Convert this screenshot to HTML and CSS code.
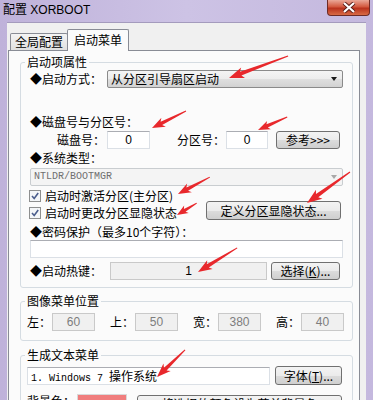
FILE: index.html
```html
<!DOCTYPE html>
<html lang="zh-CN">
<head>
    <meta charset="UTF-8">
    <title>配置 XORBOOT</title>
    <link rel="stylesheet" href="styles.css">
</head>
<body>

<div class="window">
    <div class="titlebar">
        <span class="title">配置 XORBOOT</span>
        <span class="close">
            <svg width="14" height="11" viewBox="0 0 14 11">
                <path d="M2 1L12 10M12 1L2 10" stroke="#5a1e18" stroke-width="4"/>
                <path d="M2 1L12 10M12 1L2 10" stroke="#fff" stroke-width="2.2"/>
            </svg>
        </span>
    </div>

    <div class="client">
        <div class="tabs">
            <div class="tab">全局配置</div>
            <div class="tab active">启动菜单</div>
        </div>

        <div class="panel">
            <!-- boot item properties -->
            <fieldset class="group g-boot">
                <legend>启动项属性</legend>
                <div class="gbody">
                    <div class="row r-mode">
                        <span class="lbl lbl-mode">◆启动方式：</span>
                        <div class="combo">从分区引导扇区启动<i class="caret"></i></div>
                    </div>

                    <div class="line t-disk">◆磁盘号与分区号：</div>
                    <div class="row r-disk">
                        <span class="lbl lbl-disk">磁盘号：</span>
                        <span class="field num f-disk">0</span>
                        <span class="lbl lbl-part">分区号：</span>
                        <span class="field num f-part">0</span>
                        <span class="btn b-ref">参考&gt;&gt;&gt;</span>
                    </div>

                    <div class="line t-sys">◆系统类型：</div>
                    <div class="combo disabled">NTLDR/BOOTMGR<i class="caret"></i></div>

                    <div class="row r-checks">
                        <div class="checks">
                            <label class="check">
                                <svg width="12" height="12" viewBox="0 0 12 12"><rect x="0.5" y="0.5" width="11" height="11" fill="#f4f6f8" stroke="#8e8f8f"/><path d="M3 6L5.2 8.5L9.2 3" fill="none" stroke="#4a5d8c" stroke-width="1.6"/></svg>
                                启动时激活分区(主分区)
                            </label>
                            <label class="check">
                                <svg width="12" height="12" viewBox="0 0 12 12"><rect x="0.5" y="0.5" width="11" height="11" fill="#f4f6f8" stroke="#8e8f8f"/><path d="M3 6L5.2 8.5L9.2 3" fill="none" stroke="#4a5d8c" stroke-width="1.6"/></svg>
                                启动时更改分区显隐状态
                            </label>
                        </div>
                        <span class="btn b-hide">定义分区显隐状态...</span>
                    </div>

                    <div class="line t-pw">◆密码保护（最多10个字符）：</div>
                    <div class="field f-pw"></div>

                    <div class="row r-hotkey">
                        <span class="lbl lbl-hot">◆启动热键：</span>
                        <span class="field disabled f-hot">1</span>
                        <span class="btn b-key">选择(<u>K</u>)...</span>
                    </div>
                </div>
            </fieldset>

            <!-- image menu position -->
            <fieldset class="group g-pos">
                <legend>图像菜单位置</legend>
                <div class="gbody">
                    <div class="row r-pos">
                        <span class="lbl lbl-pos">左：</span>
                        <span class="field disabled f-pos">60</span>
                        <span class="lbl lbl-pos">上：</span>
                        <span class="field disabled f-pos">50</span>
                        <span class="lbl lbl-pos">宽：</span>
                        <span class="field disabled f-pos">380</span>
                        <span class="lbl lbl-pos">高：</span>
                        <span class="field disabled f-pos">40</span>
                    </div>
                </div>
            </fieldset>

            <!-- text menu -->
            <fieldset class="group g-text">
                <legend>生成文本菜单</legend>
                <div class="gbody">
                    <div class="row r-text">
                        <span class="field f-text">1. Windows 7 <span class="cjk">操作系统</span></span>
                        <span class="btn b-font">字体(<u>T</u>)...</span>
                    </div>
                    <div class="row r-color">
                        <span class="lbl lbl-color">背景色：</span>
                        <span class="swatch"></span>
                        <span class="btn b-color">将选择的颜色设为菜单背景色</span>
                    </div>
                </div>
            </fieldset>
        </div>
    </div>

    <!-- red annotation arrows drawn over the dialog -->
    <svg class="arrows" width="373" height="400" viewBox="0 0 373 400">
        <g fill="#e8282c">
            <path transform="translate(229 78) rotate(-20.4)" d="M0 0L15-5.5L12.5-2L63-0.6L63 0.6L12.5 2L15 5.5Z"/>
            <path transform="translate(152 128) rotate(-26.6)" d="M0 0L13-5L10.5-1.8L38-0.5L38 0.5L10.5 1.8L13 5Z"/>
            <path transform="translate(258 130) rotate(-24.1)" d="M0 0L12-4.6L10-1.7L32-0.5L32 0.5L10 1.7L12 4.6Z"/>
            <path transform="translate(178 194) rotate(-28)" d="M0 0L13-5L10.5-1.8L36-0.5L36 0.5L10.5 1.8L13 5Z"/>
            <path transform="translate(307 203) rotate(-35.8)" d="M0 0L15-5.5L12.5-2L53-0.6L53 0.6L12.5 2L15 5.5Z"/>
            <path transform="translate(177 215) rotate(-31)" d="M0 0L11-4.4L9-1.6L23-0.5L23 0.5L9 1.6L11 4.4Z"/>
            <path transform="translate(198 272) rotate(-31.6)" d="M0 0L14-5.2L11.5-1.9L46-0.5L46 0.5L11.5 1.9L14 5.2Z"/>
            <path transform="translate(157 377) rotate(-44)" d="M0 0L14-5.2L11.5-1.9L39-0.5L39 0.5L11.5 1.9L14 5.2Z"/>
        </g>
    </svg>
</div>

</body>
</html>
```

FILE: styles.css
```css
* {
    box-sizing: border-box;
}
body {
    margin: 0;
    font-family: "Noto Sans CJK SC", "Liberation Sans", sans-serif;
    font-size: 12px;
    color: #000;
}
.window {
    position: relative;
    width: 373px;
    height: 400px;
    overflow: hidden;
    background: linear-gradient(to right, #bfb2da, #cdc3e5 50%, #c4b8de);
}
.titlebar {
    height: 22px;
    display: flex;
    justify-content: space-between;
    align-items: flex-start;
    padding: 0 3px;
}
.title {
    line-height: 20px;
    font-family: "Liberation Sans", "Noto Sans CJK SC", sans-serif;
}
.close {
    width: 43px;
    height: 16px;
    border: 1px solid #6e2b25;
    border-top: none;
    border-radius: 0 0 4px 4px;
    background: linear-gradient(#eaa898, #d3593f 45%, #b9321d 55%, #d86b45);
    display: flex;
    justify-content: center;
    align-items: center;
}
.client {
    margin: 0 7px;
    height: 378px;
    background: #f0f0f0;
    border-top: 1px solid #a49bbd;
}

/* tabs */
.tabs {
    height: 27px;
    display: flex;
    align-items: flex-end;
    padding-left: 3px;
}
.tab {
    height: 17px;
    padding: 0 4px;
    line-height: 16px;
    border: 1px solid #898c95;
    border-bottom: none;
    border-radius: 2px 2px 0 0;
    background: linear-gradient(#f4f4f4, #e0e0e0);
}
.tab.active {
    position: relative;
    z-index: 1;
    height: 22px;
    margin: 0 0 -1px -1px;
    padding: 0 6px 1px;
    line-height: 19px;
    background: #fbfbfb;
}
.panel {
    margin: 0 6px 0 1px;
    height: 360px;
    border: 1px solid #898c95;
    background: #fbfbfb;
    padding: 4px 6px 0 11px;
}

/* group boxes */
fieldset {
    margin: 0;
    padding: 0;
    min-width: 0;
    border: 1px solid #d5dce2;
    border-radius: 3px;
}
legend {
    margin-left: 4px;
    padding: 0 2px;
    line-height: 14px;
}
.g-boot .gbody {
    padding: 0 9px 7px;
}
.g-pos {
    margin-top: 6px;
}
.g-pos .gbody {
    padding: 5px 6px 9px;
}
.g-text {
    margin-top: 7px;
}
.g-text .gbody {
    padding: 4px 6px 10px;
}

.row {
    display: flex;
    align-items: center;
}
.line {
    height: 14px;
    line-height: 14px;
    white-space: nowrap;
}
.lbl {
    white-space: nowrap;
    line-height: 14px;
}

/* inputs, combos and buttons */
.field {
    display: block;
    height: 18px;
    line-height: 16px;
    padding: 0 3px;
    background: #fff;
    border: 1px solid #dbe0e6;
    border-top-color: #abadb3;
    white-space: nowrap;
    overflow: hidden;
}
.field.num {
    text-align: center;
    font-family: "Liberation Sans", sans-serif;
}
.field.disabled {
    background: #f0f0f0;
    border-color: #c9c9c9;
    text-align: center;
    font-family: "Liberation Sans", sans-serif;
    color: #7d7d7d;
}
.combo {
    position: relative;
    height: 18px;
    line-height: 16px;
    padding: 0 3px;
    border: 1px solid #8a8a8a;
    border-radius: 2px;
    background: linear-gradient(#f4f4f4, #ececec 50%, #dfdfdf 51%, #d2d2d2);
    white-space: nowrap;
}
.caret {
    position: absolute;
    right: 5px;
    top: 6px;
    border: 3.5px solid transparent;
    border-top: 4px solid #1a1a1a;
    border-bottom: none;
}
.combo.disabled {
    background: #f4f4f4;
    border-color: #c9cdd0;
    color: #6f6f6f;
    font-family: "Liberation Mono", monospace;
    font-size: 10px;
}
.combo.disabled .caret {
    border-top-color: #a8a8a8;
}
.btn {
    display: block;
    height: 18px;
    line-height: 16px;
    text-align: center;
    border: 1px solid #707070;
    border-radius: 3px;
    background: linear-gradient(#f3f3f3, #ebebeb 50%, #dcdcdc 51%, #cfcfcf);
    white-space: nowrap;
}

/* boot group rows */
.r-mode {
    margin-top: 1px;
    height: 18px;
}
.lbl-mode {
    width: 77px;
}
.r-mode .combo {
    flex: 1;
}
.t-disk {
    margin-top: 27px;
}
.r-disk {
    margin-top: 2px;
}
.lbl-disk {
    margin-left: 27px;
    width: 50px;
}
.f-disk {
    width: 43px;
}
.lbl-part {
    margin-left: 27px;
    width: 49px;
}
.f-part {
    width: 42px;
}
.b-ref {
    margin-left: 8px;
    width: 64px;
}
.t-sys {
    margin-top: 2px;
}
.g-boot .combo.disabled {
    margin-top: 3px;
}
.r-checks {
    margin-top: 3px;
    align-items: flex-end;
}
.checks {
    display: flex;
    flex-direction: column;
    gap: 3px;
}
.check {
    display: flex;
    align-items: center;
    gap: 4px;
    height: 14px;
    line-height: 14px;
    margin-left: -1px;
}
.b-hide {
    margin-left: auto;
    margin-right: 2px;
    width: 135px;
    height: 19px;
    line-height: 17px;
}
.t-pw {
    margin-top: 5px;
}
.f-pw {
    margin-top: 1px;
}
.r-hotkey {
    margin-top: 4px;
}
.lbl-hot {
    width: 80px;
}
.f-hot {
    width: 157px;
    font-family: "Liberation Serif", serif;
    color: #000 !important;
}
.b-key {
    margin-left: 4px;
    width: 69px;
}

/* position group */
.lbl-pos {
    width: 25px;
    margin-left: 15px;
}
.lbl-pos:first-child {
    margin-left: 0;
}
.f-pos {
    width: 43px;
}

/* text menu group */
.r-text {
    align-items: flex-end;
}
.f-text {
    width: 243px;
    font-family: "Liberation Mono", monospace;
    font-size: 10px;
}
.cjk {
    font-family: "Noto Sans CJK SC", sans-serif;
    font-size: 12px;
}
.b-font {
    margin-left: 5px;
    width: 67px;
    height: 19px;
    line-height: 17px;
}
.r-color {
    margin-top: 9px;
    align-items: flex-start;
}
.lbl-color {
    width: 50px;
}
.swatch {
    width: 50px;
    height: 18px;
    background: #f07d7d;
    border: 1px solid #d9d9d9;
}
.b-color {
    margin-left: 10px;
    margin-top: 1px;
    width: 205px;
}

.arrows {
    position: absolute;
    left: 0;
    top: 0;
    pointer-events: none;
}
```
